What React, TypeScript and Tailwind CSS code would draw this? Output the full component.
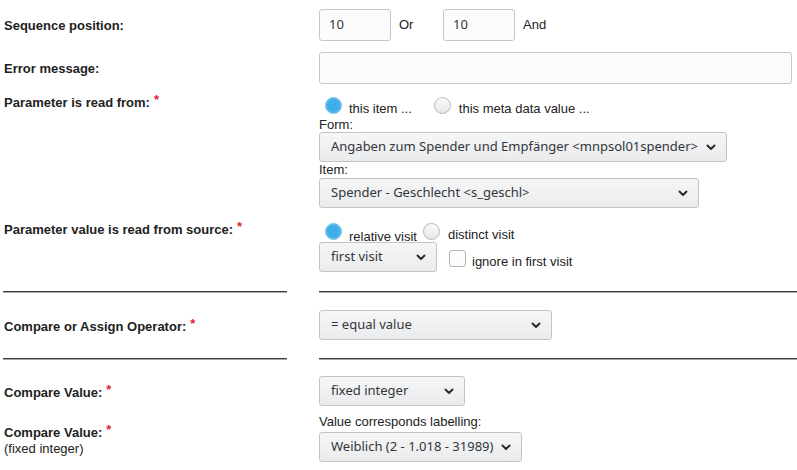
import React from 'react'

const sans = "font-['Liberation_Sans',Arial,sans-serif]"
const noto = "font-['Noto_Sans','Open_Sans',sans-serif]"

function Req() {
  return <span className="relative -top-[3px] ml-[4px] text-[#e0242b]">*</span>
}

function Label({ text, req, note, className = '' }: { text: string; req?: boolean; note?: string; className?: string }) {
  return (
    <div className={`pl-[4px] pr-[32px] ${sans} text-[13px] leading-[16px] text-[#222] ${className}`}>
      <div className="font-bold">
        {text}
        {req && <Req />}
      </div>
      {note && <div>{note}</div>}
    </div>
  )
}

function Chevron() {
  return (
    <svg width="10" height="7" viewBox="0 0 10 7" className="shrink-0">
      <path d="M1.5 1.5 L5 5 L8.5 1.5" fill="none" stroke="#2a2e32" strokeWidth="2" strokeLinecap="round" strokeLinejoin="round" />
    </svg>
  )
}

function Select({ value, width }: { value: string; width: string }) {
  return (
    <div
      className={`${width} h-[30px] flex items-center justify-between pl-[11px] pr-[10px] rounded-[3px] border border-[#c3c4c6] bg-gradient-to-b from-[#f6f6f7] to-[#eaebec] ${noto} text-[13px] text-[#31363b] whitespace-nowrap`}
    >
      <span>{value}</span>
      <Chevron />
    </div>
  )
}

function Radio({ checked }: { checked?: boolean }) {
  return checked ? (
    <span className="block w-[17px] h-[17px] rounded-full shrink-0 border border-[#7cc6ee] bg-[#3daee9] shadow-[inset_0_0_0_1px_#62bdeb]" />
  ) : (
    <span className="block w-[17px] h-[17px] rounded-full shrink-0 border border-[#b4b6b8] bg-gradient-to-b from-[#fafafa] to-[#e6e7e8]" />
  )
}

function Rule() {
  return <div className="h-[2px] border-t border-[#3f3f3f] border-b border-b-[#a8a8a8]" />
}

function Divider() {
  return (
    <div className="grid grid-cols-[319px_1fr]">
      <div className="pl-[3px] pr-[32px]">
        <Rule />
      </div>
      <Rule />
    </div>
  )
}

function TextInput({ value, className = '' }: { value?: string; className?: string }) {
  return (
    <div
      className={`h-[32px] flex items-center pl-[9px] rounded-[3px] border border-[#c6c7c8] bg-[#fcfcfc] ${noto} text-[13px] text-[#31363b] ${className}`}
    >
      {value}
    </div>
  )
}

export default function App() {
  return (
    <div className={`w-[797px] h-[470px] bg-white overflow-hidden pt-[9px] ${sans} text-[13px] text-[#222]`}>
      {/* Sequence position */}
      <div className="grid grid-cols-[319px_1fr]">
        <Label text="Sequence position:" className="pt-[9px]" />
        <div className="flex items-center">
          <TextInput value="10" className="w-[72px]" />
          <span className="pl-[8px] w-[52px]">Or</span>
          <TextInput value="10" className="w-[72px]" />
          <span className="pl-[8px]">And</span>
        </div>
      </div>

      {/* Error message */}
      <div className="grid grid-cols-[319px_1fr] mt-[11px]">
        <Label text="Error message:" className="pt-[9px]" />
        <div className="pr-[5px]">
          <TextInput className="w-full h-[31px]" />
        </div>
      </div>

      {/* Parameter is read from */}
      <div className="grid grid-cols-[319px_1fr] mt-[11px]">
        <Label text="Parameter is read from:" req />
        <div className="flex flex-col items-start">
          <div className="flex items-start h-[16px] mt-[2px] leading-[16px]">
            <span className="ml-[6px]"><Radio checked /></span>
            <span className="ml-[7px] relative top-[4px]">this item ...</span>
            <span className="ml-[22px]"><Radio /></span>
            <span className="ml-[8px] relative top-[4px]">this meta data value ...</span>
          </div>
          <div className="leading-[15px] mt-[4px]">Form:</div>
          <Select value="Angaben zum Spender und Empfänger <mnpsol01spender>" width="w-[408px]" />
          <div className="leading-[16px]">Item:</div>
          <Select value="Spender - Geschlecht <s_geschl>" width="w-[380px]" />
        </div>
      </div>

      {/* Parameter value is read from source */}
      <div className="grid grid-cols-[319px_1fr] mt-[13px]">
        <Label text="Parameter value is read from source:" req className="pt-[1px]" />
        <div className="flex flex-col items-start">
          <div className="flex items-start h-[16px] mt-[2px] leading-[16px]">
            <span className="ml-[6px]"><Radio checked /></span>
            <span className="ml-[7px] relative top-[6px]">relative visit</span>
            <span className="ml-[6px]"><Radio /></span>
            <span className="ml-[8px] relative top-[4px]">distinct visit</span>
          </div>
          <div className="flex items-start mt-[3px]">
            <Select value="first visit" width="w-[118px]" />
            <span className="ml-[12px] mt-[8px] w-[17px] h-[17px] rounded-[3px] border border-[#b4b6b8] bg-[#fcfcfc]" />
            <span className="ml-[6px] mt-[12px] leading-[16px]">ignore in first visit</span>
          </div>
        </div>
      </div>

      <div className="mt-[19px]">
        <Divider />
      </div>

      {/* Compare or Assign Operator */}
      <div className="grid grid-cols-[319px_1fr] mt-[17px]">
        <Label text="Compare or Assign Operator:" req className="pt-[9px]" />
        <div>
          <Select value="= equal value" width="w-[233px]" />
        </div>
      </div>

      <div className="mt-[18px]">
        <Divider />
      </div>

      {/* Compare Value */}
      <div className="grid grid-cols-[319px_1fr] mt-[16px]">
        <Label text="Compare Value:" req className="pt-[9px]" />
        <div>
          <Select value="fixed integer" width="w-[146px]" />
        </div>
      </div>

      <div className="grid grid-cols-[319px_1fr] mt-[8px]">
        <Label text="Compare Value:" req note="(fixed integer)" className="pt-[11px]" />
        <div className="flex flex-col items-start">
          <div className="leading-[16px]">Value corresponds labelling:</div>
          <div className="mt-[2px]">
            <Select value="Weiblich (2 - 1.018 - 31989)" width="w-[203px]" />
          </div>
        </div>
      </div>
    </div>
  )
}
